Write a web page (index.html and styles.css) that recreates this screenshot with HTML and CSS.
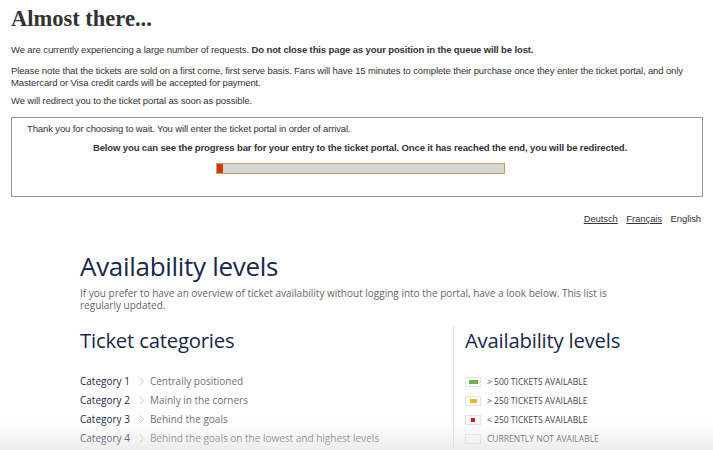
FILE: index.html
```html
<!DOCTYPE html>
<html lang="en">
<head>
    <meta charset="UTF-8">
    <title>Queue</title>
    <link rel="stylesheet" href="styles.css">
</head>
<body>
    <div class="queue">
        <h1>Almost there...</h1>
        <p class="first">We are currently experiencing a large number of requests. <b>Do not close this page as your position in the queue will be lost.</b></p>
        <p class="second">Please note that the tickets are sold on a first come, first serve basis. Fans will have 15 minutes to complete their purchase once they enter the ticket portal, and only Mastercard or Visa credit cards will be accepted for payment.</p>
        <p class="third">We will redirect you to the ticket portal as soon as possible.</p>
        <div class="waitbox">
            <p class="thanks">Thank you for choosing to wait. You will enter the ticket portal in order of arrival.</p>
            <p class="below"><b>Below you can see the progress bar for your entry to the ticket portal. Once it has reached the end, you will be redirected.</b></p>
            <div class="progress"><div class="progress-fill" style="width: 6px;"></div></div>
        </div>
        <div class="langs">
            <a href="#">Deutsch</a>
            <a href="#">Français</a>
            <span>English</span>
        </div>
    </div>

    <div class="avail">
        <h2>Availability levels</h2>
        <p class="intro">If you prefer to have an overview of ticket availability without logging into the portal, have a look below. This list is regularly updated.</p>
        <div class="cols">
            <div class="cats">
                <h3>Ticket categories</h3>
                <ul>
                    <li><span class="cat">Category 1</span><svg class="chev" width="5" height="9" viewBox="0 0 5 9"><path d="M0.5 0.5 L4.5 4.5 L0.5 8.5" fill="none" stroke="#c2cad6" stroke-width="1"/></svg><span class="desc">Centrally positioned</span></li>
                    <li><span class="cat">Category 2</span><svg class="chev" width="5" height="9" viewBox="0 0 5 9"><path d="M0.5 0.5 L4.5 4.5 L0.5 8.5" fill="none" stroke="#c2cad6" stroke-width="1"/></svg><span class="desc">Mainly in the corners</span></li>
                    <li><span class="cat">Category 3</span><svg class="chev" width="5" height="9" viewBox="0 0 5 9"><path d="M0.5 0.5 L4.5 4.5 L0.5 8.5" fill="none" stroke="#c2cad6" stroke-width="1"/></svg><span class="desc">Behind the goals</span></li>
                    <li><span class="cat">Category 4</span><svg class="chev" width="5" height="9" viewBox="0 0 5 9"><path d="M0.5 0.5 L4.5 4.5 L0.5 8.5" fill="none" stroke="#c2cad6" stroke-width="1"/></svg><span class="desc">Behind the goals on the lowest and highest levels</span></li>
                </ul>
            </div>
            <div class="levels">
                <h3>Availability levels</h3>
                <ul>
                    <li><span class="swatch"><i class="green"></i></span>&gt; 500 TICKETS AVAILABLE</li>
                    <li><span class="swatch"><i class="yellow"></i></span>&gt; 250 TICKETS AVAILABLE</li>
                    <li><span class="swatch"><i class="red"></i></span>&lt; 250 TICKETS AVAILABLE</li>
                    <li><span class="swatch"></span>CURRENTLY NOT AVAILABLE</li>
                </ul>
            </div>
        </div>
    </div>
    <div class="fade"></div>
</body>
</html>
```

FILE: styles.css
```css
body {
    margin: 0;
    font-family: "Liberation Sans", Arial, sans-serif;
    color: #333;
    background: #fff;
}

.queue {
    padding: 0 10px 0 11px;
}
.queue h1 {
    font-family: "Liberation Serif", Georgia, serif;
    font-weight: bold;
    font-size: 22.5px;
    line-height: 26px;
    margin: 0;
    padding-top: 6px;
    color: #333;
}
.queue p {
    font-size: 9.5px;
    letter-spacing: -0.12px;
    line-height: 12px;
    margin: 0;
}
.queue p.first {
    margin-top: 12px;
}
.queue p.second {
    margin-top: 9px;
}
.queue p.third {
    margin-top: 6px;
}
.waitbox {
    border: 1px solid #999;
    margin-top: 10px;
    height: 78px;
    padding: 0 15px;
}
.queue .waitbox p.thanks {
    margin-top: 5px;
}
.queue .waitbox p.below {
    text-align: center;
    margin-top: 7px;
    padding-left: 6px;
}
.progress {
    width: 287px;
    height: 9px;
    margin: 9px auto 0;
    border: 1px solid #c89a68;
    background: #d4d4d4;
    position: relative;
    left: 3px;
}
.progress-fill {
    height: 100%;
    background: #d03a0c;
}
.langs {
    text-align: right;
    font-size: 9.5px;
    letter-spacing: -0.1px;
    line-height: 12px;
    margin-top: 16px;
    padding-right: 2px;
}
.langs a {
    color: #333;
    margin-right: 6px;
}

.avail {
    margin-left: 80px;
    width: 550px;
    font-family: "Open Sans", sans-serif;
    color: #666;
}
.avail h2 {
    font-weight: normal;
    font-size: 26px;
    color: #18294a;
    margin: 25px 0 0 0;
    line-height: 32px;
    letter-spacing: -0.3px;
}
.intro {
    font-size: 10px;
    line-height: 12px;
    margin: 5px 0 0 0;
}
.cols {
    display: flex;
    margin-top: 15px;
}
.cols h3 {
    font-weight: normal;
    font-size: 20.3px;
    color: #18294a;
    margin: 0;
    line-height: 28px;
    letter-spacing: -0.2px;
}
.cols ul {
    list-style: none;
    margin: 18px 0 0 0;
    padding: 0;
}
.cats {
    width: 373px;
    border-right: 1px solid #ddd;
}
.cats li {
    font-size: 10px;
    line-height: 19px;
    display: flex;
    align-items: center;
}
.cat {
    color: #18294a;
}
.chev {
    margin: 0 6px 0 9px;
}
.desc {
    color: #707070;
}
.levels {
    padding-left: 11px;
}
.levels li {
    font-size: 8.5px;
    line-height: 19px;
    color: #444;
    display: flex;
    align-items: center;
}
.swatch {
    width: 14px;
    height: 8px;
    border: 1px solid #e4e4e4;
    margin-right: 6px;
    display: flex;
    align-items: center;
    justify-content: center;
}
.swatch i {
    display: block;
    height: 4px;
}
.swatch .green {
    width: 9px;
    background: #6cb33f;
}
.swatch .yellow {
    width: 7px;
    background: #f0b429;
}
.swatch .red {
    width: 4px;
    background: #e0102a;
}
.fade {
    position: fixed;
    left: 0;
    right: 0;
    bottom: 0;
    height: 28px;
    background: linear-gradient(rgba(230, 230, 230, 0), rgba(225, 225, 225, 0.6));
    pointer-events: none;
}
```
